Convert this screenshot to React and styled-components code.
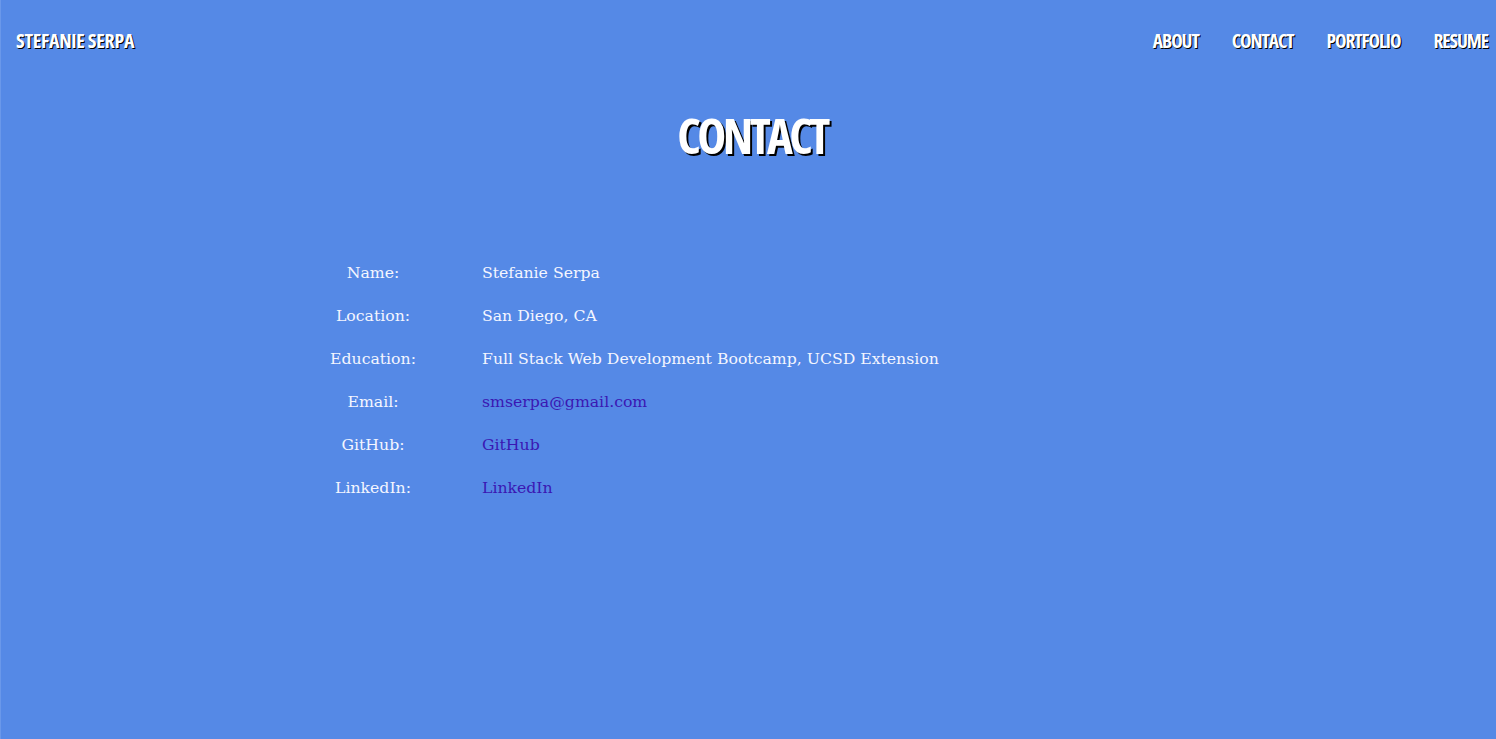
import React from "react";
import styled, { createGlobalStyle } from "styled-components";

const GlobalStyle = createGlobalStyle`
  html, body {
    margin: 0;
    padding: 0;
    background-color: #5589e6;
  }
`;

const Page = styled.div`
  min-height: 739px;
  background-color: #5589e6;
  border-left: 1px solid #6a98ea;
  box-sizing: border-box;
`;

const NavBar = styled.nav`
  display: flex;
  justify-content: space-between;
  align-items: center;
  height: 80px;
  padding: 0 8px 0 15px;
`;

const Heading = styled.span`
  font-family: "Open Sans", Roboto, sans-serif;
  font-stretch: 75%;
  font-weight: 700;
  font-size: 20px;
  color: #ffffff;
  text-shadow: 1px 1px 0 #000000;
  text-transform: uppercase;
`;

const Brand = styled(Heading)`
  letter-spacing: -0.3px;
`;

const NavLinks = styled.div`
  display: flex;
  gap: 33px;
`;

const NavItem = styled(Heading)`
  font-size: 19.5px;
  letter-spacing: -1.1px;
  cursor: pointer;
`;

const Title = styled.h1`
  margin: 20px 0 0;
  padding-left: 7px;
  text-align: center;
  font-family: "Open Sans", Roboto, sans-serif;
  font-stretch: 75%;
  font-weight: 700;
  font-size: 49px;
  letter-spacing: -3.6px;
  line-height: 70px;
  color: #ffffff;
  text-shadow: 2px 2px 0 #000000;
`;

const InfoTable = styled.div`
  display: grid;
  grid-template-columns: 110px auto;
  column-gap: 54px;
  row-gap: 20px;
  margin: 91px 0 0 317px;
  font-family: Georgia, "DejaVu Serif", serif;
  font-size: 15.7px;
  line-height: 23px;
`;

const Label = styled.div`
  text-align: center;
  color: #f4f6ff;
`;

const Value = styled.div`
  color: ${(p) => (p.$link ? "#3a17b3" : "#f4f6ff")};
`;

const rows = [
  ["Name:", "Stefanie Serpa"],
  ["Location:", "San Diego, CA"],
  ["Education:", "Full Stack Web Development Bootcamp, UCSD Extension"],
  ["Email:", "smserpa@gmail.com", true],
  ["GitHub:", "GitHub", true],
  ["LinkedIn:", "LinkedIn", true],
];

export default function App() {
  return (
    <Page>
      <GlobalStyle />
      <NavBar>
        <Brand>Stefanie Serpa</Brand>
        <NavLinks>
          <NavItem>About</NavItem>
          <NavItem>Contact</NavItem>
          <NavItem>Portfolio</NavItem>
          <NavItem>Resume</NavItem>
        </NavLinks>
      </NavBar>
      <Title>CONTACT</Title>
      <InfoTable>
        {rows.map(([label, value, link]) => (
          <React.Fragment key={label}>
            <Label>{label}</Label>
            <Value $link={link}>{value}</Value>
          </React.Fragment>
        ))}
      </InfoTable>
    </Page>
  );
}
